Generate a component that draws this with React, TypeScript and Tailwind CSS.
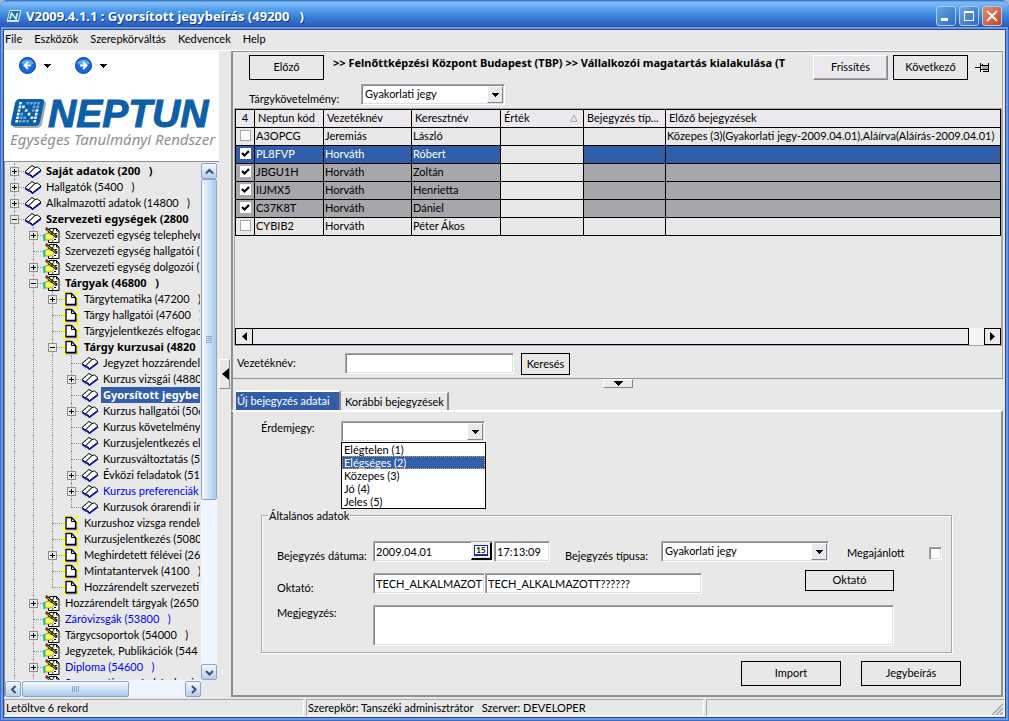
import { clsx } from "clsx";

type Kind = "book" | "form" | "page";

type TreeItem = {
  level: number;
  kind: Kind;
  label: string;
  sign?: "+" | "-";
  bold?: boolean;
  blue?: boolean;
  selected?: boolean;
};

const TREE: TreeItem[] = [
  { level: 0, kind: "book", label: "Saját adatok (200   )", sign: "+", bold: true },
  { level: 0, kind: "book", label: "Hallgatók (5400   )", sign: "+" },
  { level: 0, kind: "book", label: "Alkalmazotti adatok (14800   )", sign: "+" },
  { level: 0, kind: "book", label: "Szervezeti egységek (2800", sign: "-", bold: true },
  { level: 1, kind: "form", label: "Szervezeti egység telephelye", sign: "+" },
  { level: 1, kind: "form", label: "Szervezeti egység hallgatói (" },
  { level: 1, kind: "form", label: "Szervezeti egység dolgozói (", sign: "+" },
  { level: 1, kind: "form", label: "Tárgyak (46800   )", sign: "-", bold: true },
  { level: 2, kind: "page", label: "Tárgytematika (47200   )", sign: "+" },
  { level: 2, kind: "page", label: "Tárgy hallgatói (47600   )" },
  { level: 2, kind: "page", label: "Tárgyjelentkezés elfogad" },
  { level: 2, kind: "page", label: "Tárgy kurzusai (4820", sign: "-", bold: true },
  { level: 3, kind: "book", label: "Jegyzet hozzárendel" },
  { level: 3, kind: "book", label: "Kurzus vizsgái (4880", sign: "+" },
  { level: 3, kind: "book", label: "Gyorsított jegybe", bold: true, selected: true },
  { level: 3, kind: "book", label: "Kurzus hallgatói (506", sign: "+" },
  { level: 3, kind: "book", label: "Kurzus követelmény" },
  { level: 3, kind: "book", label: "Kurzusjelentkezés el" },
  { level: 3, kind: "book", label: "Kurzusváltoztatás (51" },
  { level: 3, kind: "book", label: "Évközi feladatok (51", sign: "+" },
  { level: 3, kind: "book", label: "Kurzus preferenciák", sign: "+", blue: true },
  { level: 3, kind: "book", label: "Kurzusok órarendi in" },
  { level: 2, kind: "page", label: "Kurzushoz vizsga rendele" },
  { level: 2, kind: "page", label: "Kurzusjelentkezés (5080" },
  { level: 2, kind: "page", label: "Meghirdetett félévei (268", sign: "+" },
  { level: 2, kind: "page", label: "Mintatantervek (4100   )" },
  { level: 2, kind: "page", label: "Hozzárendelt szervezeti" },
  { level: 1, kind: "form", label: "Hozzárendelt tárgyak (2650", sign: "+" },
  { level: 1, kind: "form", label: "Záróvizsgák (53800   )", blue: true },
  { level: 1, kind: "form", label: "Tárgycsoportok (54000   )", sign: "+" },
  { level: 1, kind: "form", label: "Jegyzetek, Publikációk (544" },
  { level: 1, kind: "form", label: "Diploma (54600   )", sign: "+", blue: true },
  { level: 1, kind: "form", label: "Szervezeti egység kérelmei" },
];

const ROWS = [
  { code: "A3OPCG", last: "Jeremiás", first: "László", checked: false, active: false, prev: "Közepes (3)(Gyakorlati jegy-2009.04.01),Aláírva(Aláírás-2009.04.01)" },
  { code: "PL8FVP", last: "Horváth", first: "Róbert", checked: true, active: true, prev: "" },
  { code: "JBGU1H", last: "Horváth", first: "Zoltán", checked: true, active: false, prev: "" },
  { code: "IIJMX5", last: "Horváth", first: "Henrietta", checked: true, active: false, prev: "" },
  { code: "C37K8T", last: "Horváth", first: "Dániel", checked: true, active: false, prev: "" },
  { code: "CYBIB2", last: "Horváth", first: "Péter Ákos", checked: false, active: false, prev: "" },
];

const GRADES = ["Elégtelen (1)", "Elégséges (2)", "Közepes (3)", "Jó (4)", "Jeles (5)"];

// bright cells of the logo tile, the N stands out in full white
const LOGO_CELLS = ["#.oooo", "##..oo", "#.#.o#", "#o.#.#", "#oo.##", "#ooo.#"];

const SUNKEN =
  "border border-t-[#a7a6aa] border-l-[#a7a6aa] border-b-white border-r-white bg-white shadow-[inset_1px_1px_0_#85878c,inset_-1px_-1px_0_#dcdfe4] outline-none";

const FLAT_BUTTON = "border border-black bg-[#e8e8e8] text-center";

// the two outer levels go on below the visible part of the tree
function continues(index: number, level: number) {
  if (level < 2) return true;
  for (let i = index + 1; i < TREE.length; i++) {
    if (TREE[i].level < level) return false;
    if (TREE[i].level === level) return true;
  }
  return false;
}

function TreeIcon({ kind }: { kind: Kind }) {
  if (kind === "book") {
    return (
      <svg width="18" height="16" viewBox="0 0 18 16" className="shrink-0">
        <path d="M1 9.500 4.500 12l2 .5 2 2L17 8" fill="none" stroke="#0000f0" strokeWidth="1.200" />
        <path d="M1 8.500 8 2.500 11 4.500 4.500 11Z" fill="#fff" stroke="#000" />
        <path d="M4.500 11 11 4.500l2.500-.5 3.500 3L8.500 13.500l-2-2Z" fill="#fff" stroke="#000" />
      </svg>
    );
  }
  if (kind === "form") {
    return (
      <svg width="18" height="16" viewBox="0 0 18 16" className="shrink-0">
        <path d="M6.500 1.500h7l2.500 2.500v11.500H5.500V8Z" fill="#fff" stroke="#000" />
        <path d="M13.500 1.500V4H16" fill="none" stroke="#000" />
        <path d="M9 14h1.500M12 10h1.500M11 12.500h2M12 6.500h2" stroke="#000" />
        <path d="M0 7h2v7H0Z" fill="#00e0f0" />
        <path d="M2 7.500 5 6l6 2.500v1.500L8.500 13H2Z" fill="#ffff50" stroke="#807000" strokeWidth="0.700" />
        <path d="M3 1.500l11 8.500" stroke="#000" strokeWidth="2.400" />
        <path d="M4 2.500l8.500 6.500" stroke="#f0e000" strokeWidth="1" />
        <path d="M3 .5l1.500 1.500" stroke="#e00000" strokeWidth="1.600" />
        <path d="M11 2 8 8" stroke="#000" />
      </svg>
    );
  }
  return (
    <svg width="18" height="16" viewBox="0 0 18 16" className="shrink-0">
      <path d="M2 0l4 4M9 0v3M17 0l-4 4M0 8h4M1 16l4-4M18 8h-3M17 15l-3-3" stroke="#ffff00" strokeWidth="2" />
      <path d="M4 14.500h10.500V7" fill="none" stroke="#808080" strokeWidth="1.400" />
      <path d="M4 2.500h5.500l4 4v7H4Z" fill="#fff" stroke="#000" strokeWidth="1.300" />
      <path d="M9.500 2.500v4h4" fill="none" stroke="#000" />
    </svg>
  );
}

function TreeRow({ item, index }: { item: TreeItem; index: number }) {
  return (
    <li className="flex h-4 items-center">
      {Array.from({ length: item.level }, (_, level) => (
        <span key={level} className="flex h-4 w-[19px] shrink-0 pl-[9px]">
          {continues(index, level) && <span className="border-l border-dotted border-[#909090]" />}
        </span>
      ))}
      <span className="relative h-4 w-[19px] shrink-0">
        <span
          className={clsx(
            "absolute left-[9px] top-0 border-l border-dotted border-[#909090]",
            continues(index, item.level) ? "h-4" : "h-2"
          )}
        />
        <span className="absolute left-[9px] right-0 top-2 border-t border-dotted border-[#909090]" />
        {item.sign && (
          <svg width="9" height="9" className="absolute left-[5px] top-1" shapeRendering="crispEdges">
            <rect x="0.500" y="0.500" width="8" height="8" fill="#e8e8e8" stroke="#909090" />
            <path d={item.sign === "+" ? "M2 4.500h5M4.500 2v5" : "M2 4.500h5"} stroke="#000" />
          </svg>
        )}
      </span>
      <span className="flex w-5 shrink-0">
        <TreeIcon kind={item.kind} />
      </span>
      <span
        className={clsx(
          "h-4 flex-1 whitespace-pre pl-[2px] leading-4",
          item.bold && "font-['Noto_Sans',sans-serif] font-bold",
          item.blue && "text-[#0000f0]",
          item.selected && "bg-[#315ea8] text-white"
        )}
      >
        {item.label}
      </span>
    </li>
  );
}

function ScrollArrow({ d, label }: { d: string; label: string }) {
  return (
    <button
      aria-label={label}
      className="flex size-4 shrink-0 items-center justify-center rounded-[2px] border border-[#8ba5c4] bg-gradient-to-b from-[#f4f9ff] to-[#b5d0ec]"
    >
      <svg width="9" height="9" viewBox="0 0 9 9">
        <path d={d} fill="none" stroke="#3f4f63" strokeWidth="2" />
      </svg>
    </button>
  );
}

function Logo() {
  return (
    <div className="mt-[23px]">
      <div className="flex items-center">
        <svg width="38" height="34" viewBox="0 0 38 34" className="shrink-0">
          <path d="M11 4h22q4 0 3 4l-4 19q-1 4-5 4H6q-4 0-3-4L7 8q1-4 4-4Z" fill="#a8acb2" />
          <path d="M10 2h21q4 0 3 4l-4 19q-1 4-5 4H4q-4 0-3-4L5 6q1-4 5-4Z" fill="#0c5fa8" />
          <g transform="translate(9.500 5) skewX(-12)">
            {LOGO_CELLS.map((line, y) =>
              line.split("").map((c, x) =>
                c === "." ? null : (
                  <rect
                    key={`${x}-${y}`}
                    x={x * 3.6}
                    y={y * 3.6}
                    width="2.600"
                    height="2.600"
                    fill={c === "#" ? "#f2f8fd" : "#6fa8d6"}
                  />
                )
              )
            )}
          </g>
        </svg>
        <span className="font-['Liberation_Sans',sans-serif] text-[39px] font-bold italic leading-[34px] text-[#0c5fa8] [-webkit-text-stroke:1px_#0c5fa8]">
          NEPTUN
        </span>
      </div>
      <div className="whitespace-nowrap font-['Noto_Sans',sans-serif] text-[15px] italic leading-4 text-[#8c9096]">
        Egységes Tanulmányi Rendszer
      </div>
    </div>
  );
}

function Sidebar() {
  return (
    <aside className="flex w-[215px] shrink-0 flex-col">
      <div className="h-[110px] shrink-0 bg-white px-[6px] pt-[6px]">
        <div className="flex items-center gap-2 pl-[9px]">
          <NavButton label="Vissza" d="M9 5 5.500 8.500 9 12M6 8.500h6" />
          <Caret />
          <NavButton label="Előre" d="M8 5l3.500 3.500L8 12M11 8.500H5" />
          <Caret />
        </div>
        <Logo />
      </div>

      <div className="flex min-h-0 flex-1 flex-col border-l border-t border-[#909090] pt-px">
        <div className="flex min-h-0 flex-1">
          <ul className="mr-px min-w-0 flex-1 overflow-hidden">
            {TREE.map((item, i) => (
              <TreeRow key={item.label} item={item} index={i} />
            ))}
          </ul>
          <div className="mr-[2px] flex w-4 shrink-0 flex-col bg-[#f0f5ff]">
            <ScrollArrow label="Fel" d="M1 6.500 4.500 3 8 6.500" />
            <div className="flex h-[321px] items-center justify-center rounded-[2px] border border-[#8ba5c4] bg-gradient-to-r from-[#f4f9ff] to-[#a9c8ec]">
              <span className="h-[7px] w-[6px] bg-[repeating-linear-gradient(#8ba5c4_0_1px,transparent_1px_2px)]" />
            </div>
            <span className="flex-1" />
            <ScrollArrow label="Le" d="M1 3l3.500 3.500L8 3" />
          </div>
        </div>
        <div className="mr-[18px] flex h-[17px] shrink-0 bg-[#f0f5ff] pt-px">
          <ScrollArrow label="Balra" d="M6.500 1 3 4.500 6.500 8" />
          <div className="ml-px flex w-[107px] items-center justify-center rounded-[2px] border border-[#8ba5c4] bg-gradient-to-b from-[#f4f9ff] to-[#a9c8ec]">
            <span className="h-[6px] w-[8px] bg-[repeating-linear-gradient(90deg,#8ba5c4_0_1px,transparent_1px_2px)]" />
          </div>
          <span className="flex-1" />
          <ScrollArrow label="Jobbra" d="M3 1l3.500 3.500L3 8" />
        </div>
      </div>
    </aside>
  );
}

function NavButton({ label, d }: { label: string; d: string }) {
  return (
    <button aria-label={label}>
      <svg width="17" height="17" viewBox="0 0 17 17">
        <circle cx="8.500" cy="8.500" r="8" fill="#1769e0" stroke="#0a3aa0" />
        <path d="M2 6.500a7 6 0 0 1 13 0q-6.500 3-13 0Z" fill="#5aa5f5" />
        <path d={d} fill="none" stroke="#fff" strokeWidth="2" />
      </svg>
    </button>
  );
}

function Caret() {
  return (
    <svg width="23" height="4" viewBox="0 0 23 4" shapeRendering="crispEdges">
      <path d="M0 0h7L3.500 4Z" fill="#000" />
    </svg>
  );
}

function Combo({ id, value, className, label }: { id: string; value?: string; className: string; label?: string }) {
  return (
    <div className={clsx("relative h-[21px]", className)}>
      <select id={id} aria-label={label} className={clsx(SUNKEN, "h-full w-full appearance-none pl-[3px] pr-5")}>
        {value ? <option>{value}</option> : <option />}
        {!value && GRADES.map((g) => <option key={g}>{g}</option>)}
      </select>
      <span className="pointer-events-none absolute bottom-[2px] right-[2px] top-[2px] flex w-4 items-center justify-center border border-b-[#85878c] border-l-white border-r-[#85878c] border-t-white bg-[#ebe9ed]">
        <svg width="7" height="4" shapeRendering="crispEdges">
          <path d="M0 0h7L3.500 4Z" fill="#000" />
        </svg>
      </span>
    </div>
  );
}

function RowCheck({ checked, label }: { checked: boolean; label: string }) {
  return (
    <span className="relative mx-auto mt-[2px] block size-[11px]">
      <input
        type="checkbox"
        defaultChecked={checked}
        aria-label={label}
        className="peer block size-[11px] appearance-none border border-[#a7a6aa] bg-white checked:border-white"
      />
      <svg
        width="11"
        height="11"
        viewBox="0 0 11 11"
        className="pointer-events-none absolute inset-0 hidden peer-checked:block"
      >
        <path d="M2 5l2.500 2.500L9 3" fill="none" stroke="#000" strokeWidth="2.200" />
      </svg>
    </span>
  );
}

function StudentTable() {
  const cell = "border border-black p-0 pl-px";
  const head = "border border-black p-0 pl-[3px] text-left font-normal";
  return (
    <table className="w-full table-fixed border-collapse whitespace-nowrap">
      <colgroup>
        <col className="w-[19px]" />
        <col className="w-[69px]" />
        <col className="w-[88px]" />
        <col className="w-[89px]" />
        <col className="w-[83px]" />
        <col className="w-[82px]" />
        <col />
      </colgroup>
      <thead>
        <tr className="h-[18px] bg-[#ebe9ed] align-top leading-4">
          <th className="border border-black p-0 text-center font-normal">4</th>
          <th className={head}>Neptun kód</th>
          <th className={head}>Vezetéknév</th>
          <th className={head}>Keresztnév</th>
          <th className={head}>
            <span className="flex items-center justify-between pr-[5px]">
              Érték
              <svg width="8" height="8" viewBox="0 0 8 8">
                <path d="M4 1 .8 7.500h6.400Z" fill="none" stroke="#a7a6aa" />
              </svg>
            </span>
          </th>
          <th className={head}>Bejegyzés típ...</th>
          <th className={head}>Előző bejegyzések</th>
        </tr>
      </thead>
      <tbody>
        {ROWS.map((r) => (
          <tr
            key={r.code}
            className={clsx(
              "h-[18px] align-top leading-4",
              r.active ? "bg-[#315ea8] text-white" : r.checked && "bg-[#a7a6aa]"
            )}
          >
            <td className="border border-black p-0">
              <RowCheck checked={r.checked} label={r.code} />
            </td>
            <td className={cell}>{r.code}</td>
            <td className={cell}>{r.last}</td>
            <td className={cell}>{r.first}</td>
            <td className={clsx(cell, "bg-[#e8e8e8]")} />
            <td className={cell} />
            <td className={cell}>{r.prev}</td>
          </tr>
        ))}
      </tbody>
    </table>
  );
}

function UpperPanel() {
  return (
    <section className="flex h-[328px] shrink-0 flex-col border-b border-l-2 border-r border-t border-[#909090] border-r-[#a7a6aa]">
      <div className="flex items-start pl-4 pt-[3px]">
        <button className={clsx(FLAT_BUTTON, "h-[25px] w-[75px] shrink-0")}>Előző</button>
        <div className="ml-[9px] min-w-0 flex-1 overflow-hidden whitespace-nowrap font-['Noto_Sans',sans-serif] font-bold leading-4">
          &gt;&gt; Felnőttképzési Központ Budapest (TBP) &gt;&gt; Vállalkozói magatartás kialakulása (T
        </div>
        <button className="ml-[9px] h-[25px] w-[75px] shrink-0 border border-b-[#85878c] border-l-white border-r-[#85878c] border-t-white bg-[#ebe9ed] shadow-[inset_-1px_-1px_0_#a7a6aa]">
          Frissítés
        </button>
        <button className={clsx(FLAT_BUTTON, "ml-[5px] h-[25px] w-[75px] shrink-0")}>Következő</button>
        <button aria-label="Rögzítés" className="ml-[7px] mr-3 mt-[7px]">
          <svg width="15" height="11" viewBox="0 0 15 11" shapeRendering="crispEdges">
            <path d="M0 5.500h5M5.500 1v9M13.500 1v9" stroke="#000" />
            <path d="M6 3.500h1l1-1M6 7.500h7v1.500H8M8 3h5" fill="none" stroke="#000" />
            <path d="M7 4h6v3H7Z" fill="#a7a6aa" />
          </svg>
        </button>
      </div>
      <div className="mt-1 flex pl-4">
        <label htmlFor="requirement" className="w-28 pt-[7px] leading-4">
          Tárgykövetelmény:
        </label>
        <Combo id="requirement" value="Gyakorlati jegy" className="w-36" />
      </div>
      <div className="ml-px mt-px flex min-h-0 flex-1 flex-col border border-[#a7a6aa]">
        <StudentTable />
        <span className="flex-1" />
        <div className="flex h-[17px] shrink-0 bg-[#f4f3f6]">
          <button aria-label="Görgetés balra" className="flex w-[18px] items-center justify-center border border-black bg-[#ebe9ed]">
            <svg width="5" height="9">
              <path d="M5 0v9L0 4.500Z" />
            </svg>
          </button>
          <div className="mr-[15px] flex-1 border border-l-0 border-black bg-[#ebe9ed]" />
          <button aria-label="Görgetés jobbra" className="flex w-[17px] items-center justify-center border border-black bg-[#ebe9ed]">
            <svg width="5" height="9">
              <path d="M0 0v9l5-4.500Z" />
            </svg>
          </button>
        </div>
      </div>
      <div className="flex h-8 shrink-0 pl-1 pt-[7px]">
        <label htmlFor="lastname" className="w-[108px] pt-[2px] leading-4">
          Vezetéknév:
        </label>
        <input id="lastname" className={clsx(SUNKEN, "h-[21px] w-[169px]")} />
        <button className={clsx(FLAT_BUTTON, "ml-[7px] h-[22px] w-[49px]")}>Keresés</button>
      </div>
    </section>
  );
}

function EntryForm() {
  return (
    <section className="flex min-h-0 flex-1 flex-col">
      <div className="flex h-[11px] shrink-0 justify-center border-l-2 border-[#909090]">
        <button
          aria-label="Panel összecsukása"
          className="flex h-[9px] w-[30px] items-center justify-center border border-b-[#85878c] border-l-white border-r-[#85878c] border-t-white bg-[#ebe9ed]"
        >
          <svg width="11" height="5" shapeRendering="crispEdges">
            <path d="M0 0h11L5.500 5Z" />
          </svg>
        </button>
      </div>
      <div role="tablist" className="flex h-[20px] shrink-0 items-end border-l-2 border-[#909090] pl-[3px]">
        <button
          role="tab"
          aria-selected="true"
          className="h-[20px] w-[105px] border-r-2 border-t-2 border-r-[#85878c] border-t-white bg-[#315ea8] pl-px text-left leading-4 text-white"
        >
          Új bejegyzés adatai
        </button>
        <button
          role="tab"
          aria-selected="false"
          className="h-[18px] w-[108px] whitespace-nowrap border-r-2 border-t border-r-[#85878c] border-t-white pl-1 text-left leading-4"
        >
          Korábbi bejegyzések
        </button>
      </div>
      <div className="flex min-h-0 flex-1 flex-col border-2 border-[#909090] border-t-white">
        <div className="flex pl-7 pt-2">
          <label htmlFor="grade" className="w-20 leading-4">
            Érdemjegy:
          </label>
          <div className="relative mt-px">
            <Combo id="grade" className="w-36" />
            <ul
              role="listbox"
              aria-label="Érdemjegy"
              className="absolute left-0 top-[21px] z-10 w-[145px] border border-black bg-white leading-[13px]"
            >
              {GRADES.map((g, i) => (
                <li
                  key={g}
                  role="option"
                  aria-selected={i === 1}
                  className={clsx(
                    "h-[13px] pl-[2px]",
                    i === 1 && "bg-[#315ea8] text-white outline outline-1 -outline-offset-1 outline-dotted outline-[#cea157]"
                  )}
                >
                  {g}
                </li>
              ))}
            </ul>
          </div>
        </div>

        <fieldset className="relative ml-7 mr-[49px] mt-[73px] border border-[#a7a6aa] pb-[6px] pl-[15px] pr-2 pt-[25px] shadow-[1px_1px_0_#fff,inset_1px_1px_0_#fff]">
          <legend className="absolute -top-2 left-[6px] bg-[#e8e8e8] px-px leading-4">Általános adatok</legend>
          <div className="flex items-start">
            <label htmlFor="date" className="w-24 shrink-0 pt-[7px] leading-4">
              Bejegyzés dátuma:
            </label>
            <div className="relative">
              <input id="date" defaultValue="2009.04.01" className={clsx(SUNKEN, "h-[21px] w-[120px] pl-[2px]")} />
              <button
                aria-label="Naptár"
                className="absolute right-px top-px flex h-[18px] w-[21px] items-center justify-center border border-b-2 border-r-2 border-b-black border-l-white border-r-black border-t-white bg-[#ebe9ed]"
              >
                <span className="border border-b-2 border-[#203080] bg-white px-px text-[8px] font-bold leading-[8px]">15</span>
              </button>
            </div>
            <input
              aria-label="Bejegyzés ideje"
              defaultValue="17:13:09"
              className={clsx(SUNKEN, "ml-px h-[21px] w-14 pl-[2px]")}
            />
            <label htmlFor="type" className="ml-[15px] w-24 shrink-0 pt-[7px] leading-4">
              Bejegyzés típusa:
            </label>
            <Combo id="type" value="Gyakorlati jegy" className="w-[168px]" />
            <label htmlFor="offered" className="ml-[18px] w-[82px] pt-[4px] leading-4">
              Megajánlott
            </label>
            <input
              id="offered"
              type="checkbox"
              className={clsx(SUNKEN, "mt-[6px] size-[13px] appearance-none")}
            />
          </div>
          <div className="mt-[6px] flex items-start">
            <label htmlFor="teacher" className="w-24 shrink-0 pt-[10px] leading-4">
              Oktató:
            </label>
            <input
              id="teacher"
              defaultValue="TECH_ALKALMAZOT"
              className={clsx(SUNKEN, "mt-[3px] h-[21px] w-28 pl-[2px]")}
            />
            <input
              aria-label="Oktató neve"
              defaultValue="TECH_ALKALMAZOTT??????"
              className={clsx(SUNKEN, "mt-[3px] h-[21px] w-[217px] pl-[2px]")}
            />
            <button className={clsx(FLAT_BUTTON, "ml-auto mr-[49px] h-[21px] w-[89px]")}>Oktató</button>
          </div>
          <div className="mt-[9px] flex items-start">
            <label htmlFor="note" className="w-24 shrink-0 leading-4">
              Megjegyzés:
            </label>
            <textarea id="note" className={clsx(SUNKEN, "mr-[49px] h-[41px] flex-1 resize-none")} />
          </div>
        </fieldset>

        <div className="mr-10 mt-2 flex justify-end gap-5">
          <button className={clsx(FLAT_BUTTON, "h-[25px] w-[100px]")}>Import</button>
          <button className={clsx(FLAT_BUTTON, "h-[25px] w-[100px]")}>Jegybeírás</button>
        </div>
      </div>
    </section>
  );
}

function TitleBar() {
  const control = "flex size-5 items-center justify-center rounded-[3px] border border-[#a9cdf5]";
  return (
    <header className="flex h-[30px] shrink-0 items-center rounded-t-lg bg-[linear-gradient(#2a50a0_0,#5b9fe8_1px,#82bdf5_3px,#5ba5ee_8px,#3f8be2_14px,#3273cf_20px,#2a55b4_28px,#264a9c_30px)] pl-[6px] pr-[7px] pt-px">
      <svg width="16" height="14" viewBox="0 0 16 14" className="mr-1">
        <path d="M4 1h10q2 0 1 2l-2 9q0 1-2 1H2q-2 0-1-2L3 2Z" fill="#d8e8f5" />
        <path d="M4 2h9q1 0 1 1l-2 8H2Z" fill="#1d6fb0" />
        <path d="M4 10 5.500 4l4.500 6L11.500 4" fill="none" stroke="#e4f2fb" strokeWidth="1.600" />
      </svg>
      <h1 className="flex-1 whitespace-pre font-['Noto_Sans',sans-serif] text-[13px] font-bold leading-5 text-white [text-shadow:1px_1px_0_#123a80]">
        V2009.4.1.1 : Gyorsított jegybeírás (49200   )
      </h1>
      <div className="flex gap-[3px]">
        <button aria-label="Kis méret" className={clsx(control, "bg-gradient-to-br from-[#6ba3e4] to-[#2f6cc4]")}>
          <svg width="12" height="12">
            <path d="M1 8h7v3H1Z" fill="#fff" />
          </svg>
        </button>
        <button aria-label="Teljes méret" className={clsx(control, "bg-gradient-to-br from-[#6ba3e4] to-[#2f6cc4]")}>
          <svg width="12" height="12" shapeRendering="crispEdges">
            <path d="M1 1h10v10H1ZM2 3v7h8V3Z" fill="#fff" fillRule="evenodd" />
          </svg>
        </button>
        <button aria-label="Bezárás" className={clsx(control, "bg-gradient-to-br from-[#ee8668] to-[#cf3a1c]")}>
          <svg width="12" height="12">
            <path d="M1 1l10 10M11 1 1 11" stroke="#fff" strokeWidth="2.200" />
          </svg>
        </button>
      </div>
    </header>
  );
}

export default function App() {
  const pane = "h-[17px] border border-b-white border-l-[#a7a6aa] border-r-white border-t-[#a7a6aa] px-px leading-4";
  return (
    <div className="h-screen bg-[#9fb6dd]">
      <div className="flex h-full flex-col overflow-hidden rounded-t-lg bg-[#3a6cc8] font-['Lato',sans-serif] text-[11px] text-black">
        <TitleBar />
        <div className="mx-1 mb-1 flex min-h-0 flex-1 flex-col bg-[#e8e8e8] shadow-[0_0_0_1px_#25489a,0_0_0_3px_#6e9be0]">
          <nav className="flex h-[21px] shrink-0 gap-3 border-b border-white pl-px leading-[18px]">
            <button className="self-start">File</button>
            <button className="self-start">Eszközök</button>
            <button className="self-start">Szerepkörváltás</button>
            <button className="self-start">Kedvencek</button>
            <button className="self-start">Help</button>
          </nav>

          <div className="flex min-h-0 flex-1">
            <Sidebar />
            <div className="flex w-3 shrink-0 flex-col justify-center">
              <button
                aria-label="Oldalsáv összecsukása"
                className="flex h-[30px] w-[11px] items-center justify-end border border-b-[#85878c] border-l-white border-r-[#85878c] border-t-white"
              >
                <svg width="7" height="12">
                  <path d="M7 0v12L0 6Z" />
                </svg>
              </button>
            </div>
            <main className="mr-[2px] flex min-w-0 flex-1 flex-col">
              <UpperPanel />
              <EntryForm />
            </main>
          </div>

          <footer className="flex h-5 shrink-0 gap-[2px] whitespace-pre pt-[2px]">
            <div className={clsx(pane, "w-[300px]")}>Letöltve 6 rekord</div>
            <div className={clsx(pane, "w-[398px]")}>Szerepkör: Tanszéki adminisztrátor   Szerver: DEVELOPER</div>
            <div className={clsx(pane, "flex flex-1 items-end justify-end")}>
              <svg width="12" height="12">
                <path d="M1 12 12 1M5 12l7-7M9 12l3-3" stroke="#a7a6aa" strokeWidth="1.500" />
              </svg>
            </div>
          </footer>
        </div>
      </div>
    </div>
  );
}
